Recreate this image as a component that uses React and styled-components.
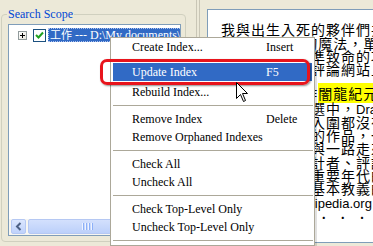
import React from 'react';
import styled, { createGlobalStyle } from 'styled-components';

const GlobalStyle = createGlobalStyle`
  html, body {
    margin: 0;
    padding: 0;
  }
  body {
    background: #ece9d8;
    font-family: "Liberation Serif", serif;
    overflow: hidden;
  }
`;

const Screen = styled.div`
  position: relative;
  width: 373px;
  height: 246px;
  overflow: hidden;
  display: flex;
`;

const LeftPane = styled.div`
  width: 196px;
  flex: none;
  padding: 7px 0 0 1px;
  box-sizing: border-box;
`;

const GroupBox = styled.fieldset`
  margin: 0 10px 0 0;
  padding: 3px 4px 5px 6px;
  border: 1px solid #d0d0bf;
  border-radius: 4px;
  min-width: 0;
`;

const Legend = styled.legend`
  padding: 0 1px;
  margin-left: -1px;
  color: #0046d5;
  font-size: 12px;
  line-height: 14px;
`;

const TreeView = styled.div`
  height: 210px;
  background: #fff;
  border: 1px solid #7f9db9;
  display: flex;
  flex-direction: column;
  overflow: hidden;
`;

const TreeBody = styled.div`
  flex: 1;
  padding: 3px 0 0 9px;
`;

const TreeRow = styled.div`
  display: flex;
  align-items: center;
  height: 14px;
  white-space: nowrap;
`;

const Expander = styled.span`
  width: 7px;
  height: 7px;
  flex: none;
  border: 1px solid #919b9c;
  background: linear-gradient(135deg, #fff 0%, #e8e6dc 100%);
  position: relative;
  margin-right: 6px;

  &::before,
  &::after {
    content: '';
    position: absolute;
    background: #000;
  }
  &::before {
    left: 1px;
    top: 3px;
    width: 5px;
    height: 1px;
  }
  &::after {
    left: 3px;
    top: 1px;
    width: 1px;
    height: 5px;
  }
`;

const CheckBox = styled.span`
  width: 11px;
  height: 11px;
  flex: none;
  border: 1px solid #1c5180;
  background: #fff;
  display: flex;
  align-items: center;
  justify-content: center;
  margin-right: 2px;
`;

const TreeLabel = styled.span`
  background: #316ac5;
  color: #fff;
  outline: 1px dotted #b0c4ee;
  outline-offset: -1px;
  padding: 0 2px;
  height: 14px;
  line-height: 14px;
  font-size: 12px;
  font-family: "Liberation Serif", "Noto Sans CJK TC", serif;
`;

const Cjk = styled.span`
  font-size: 11px;
`;

const HScroll = styled.div`
  height: 15px;
  display: flex;
  gap: 2px;
  padding: 0 1px 1px 2px;
  background: #f7f6f1;
`;

const ScrollButton = styled.div`
  width: 15px;
  height: 15px;
  box-sizing: border-box;
  border: 1px solid #b5c8f3;
  border-radius: 2px;
  background: linear-gradient(180deg, #dbe6fe 0%, #bfd2fb 100%);
  display: flex;
  align-items: center;
  justify-content: center;
`;

const Thumb = styled.div`
  width: 118px;
  height: 15px;
  box-sizing: border-box;
  border: 1px solid #b5c8f3;
  border-radius: 2px;
  background: linear-gradient(180deg, #d3e0fd 0%, #bcd0fa 100%);
  display: flex;
  align-items: center;
  justify-content: center;
  gap: 1px;
`;

const Grip = styled.span`
  width: 1px;
  height: 7px;
  background: #eef3ff;
  box-shadow: 1px 0 0 #8cb0f8;
  margin-right: 1px;
`;

const Splitter = styled.div`
  width: 11px;
  flex: none;
  display: flex;
  gap: 2px;
`;

const SplitLine = styled.div`
  width: 1px;
  background: #c9c6b6;
`;

const TextPanel = styled.div`
  flex: 1;
  margin-top: 9px;
  height: 219px;
  background: #fff;
  border: 1px solid #7f9db9;
  border-right: none;
  padding: 13px 0 0 13px;
  overflow: hidden;
  font-family: "Noto Sans CJK TC", "Liberation Sans", sans-serif;
  font-size: 14px;
  letter-spacing: 1px;
  color: #000;
`;

const Line = styled.div`
  white-space: nowrap;
  line-height: 13.3px;
  height: 13.3px;
  margin-top: ${p => p.gap || 0}px;
`;

const Latin = styled.span`
  font-family: "Liberation Sans", sans-serif;
  font-size: 13px;
  letter-spacing: 0;
`;

const Mark = styled.span`
  background: #ffff00;
  padding-right: 20px;
`;

const Menu = styled.div`
  position: absolute;
  left: 110px;
  top: 37px;
  width: 203px;
  background: #fff;
  border: 1px solid #aca899;
  box-shadow: 2px 2px 0 rgba(0, 0, 0, 0.12);
  font-size: 12px;
  color: #000;
`;

const MenuItem = styled.div`
  position: relative;
  display: grid;
  grid-template-columns: 134px 1fr;
  height: 18px;
  line-height: 18px;
  padding-left: 19px;
  margin: ${p => (p.active ? '7px 2px 2px' : '0 2px')};
  background: ${p => (p.active ? '#316ac5' : 'transparent')};
  color: ${p => (p.active ? '#fff' : '#000')};
  white-space: nowrap;
`;

const Separator = styled.div`
  height: 1px;
  margin: 4px 1px 4px 2px;
  background: #aca899;
`;

const Callout = styled.div`
  position: absolute;
  left: -13px;
  right: 2px;
  top: -4px;
  bottom: -4px;
  border: 3px solid #e8141c;
  border-radius: 7px;
  box-shadow: 1px 1px 2px rgba(0, 0, 0, 0.45);
  pointer-events: none;
`;

const Cursor = styled.svg`
  position: absolute;
  left: 236px;
  top: 82px;
`;

const menuGroups = [
  [
    { label: 'Create Index...', key: 'Insert' },
    { label: 'Update Index', key: 'F5', active: true },
    { label: 'Rebuild Index...' },
  ],
  [
    { label: 'Remove Index', key: 'Delete' },
    { label: 'Remove Orphaned Indexes' },
  ],
  [{ label: 'Check All' }, { label: 'Uncheck All' }],
  [{ label: 'Check Top-Level Only' }, { label: 'Uncheck Top-Level Only' }],
];

export default function App() {
  return (
    <Screen>
      <GlobalStyle />
      <LeftPane>
        <GroupBox>
          <Legend>Search Scope</Legend>
          <TreeView>
            <TreeBody>
              <TreeRow>
                <Expander />
                <CheckBox>
                  <svg width="9" height="9" viewBox="0 0 9 9">
                    <path d="M1 4 L3.5 6.5 L8 1.5" stroke="#21a121" strokeWidth="2" fill="none" />
                  </svg>
                </CheckBox>
                <TreeLabel>
                  <Cjk>工作</Cjk> --- D:\My documents\
                </TreeLabel>
              </TreeRow>
            </TreeBody>
            <HScroll>
              <ScrollButton>
                <svg width="7" height="9" viewBox="0 0 7 9">
                  <path d="M5.5 1 L2 4.5 L5.5 8" stroke="#4d6185" strokeWidth="2" fill="none" />
                </svg>
              </ScrollButton>
              <Thumb>
                <Grip />
                <Grip />
                <Grip />
                <Grip />
              </Thumb>
            </HScroll>
          </TreeView>
        </GroupBox>
      </LeftPane>
      <Splitter>
        <SplitLine />
        <SplitLine />
      </Splitter>
      <TextPanel>
        <Line>我與出生入死的夥伴們共同</Line>
        <Line gap={0.5}>
          感受到第<Latin>3</Latin>代的魔法，單一
        </Line>
        <Line>每一擊都能精準致命的攻擊</Line>
        <Line>在各大遊戲的評論網站上</Line>
        <Line gap={10}>
          在 <Latin>2009</Latin> 年新作<Mark>闇龍紀元</Mark>
        </Line>
        <Line gap={2.5}>
          在年度遊戲評選中，<Latin>Dragon Age</Latin>
        </Line>
        <Line>連一個獎項也入圍都沒有</Line>
        <Line>這是十分優秀的作品，一</Line>
        <Line>玩家跟著主角與一路走來</Line>
        <Line>身為遊戲的設計者、評論者</Line>
        <Line>奇幻遊戲中最重要年代的</Line>
        <Line>回歸角色扮演基本教義的</Line>
        <Line>
          取自維基：<Latin>wikipedia.org</Latin>
        </Line>
        <Line gap={2}>． ． ． ． ． ． ． ．</Line>
      </TextPanel>

      <Menu>
        {menuGroups.map((group, g) => (
          <React.Fragment key={g}>
            {group.map(item => (
              <MenuItem key={item.label} active={item.active}>
                <span>{item.label}</span>
                <span>{item.key}</span>
                {item.active && <Callout />}
              </MenuItem>
            ))}
            <Separator />
          </React.Fragment>
        ))}
      </Menu>

      <Cursor width="13" height="21" viewBox="0 0 13 21">
        <path
          d="M0.5 0.5 L0.5 16.5 L4.5 12.5 L7.5 19.5 L9.5 18.5 L6.5 11.5 L11.5 11.5 Z"
          fill="#fff"
          stroke="#000"
          strokeWidth="1"
        />
      </Cursor>
    </Screen>
  );
}
